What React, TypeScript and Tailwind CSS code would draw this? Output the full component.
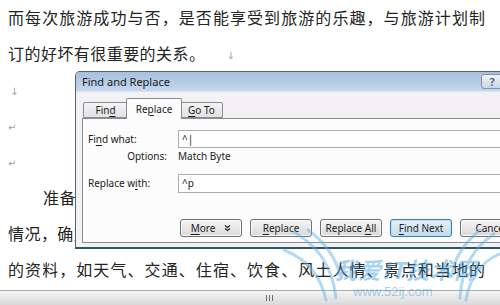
import type { ReactNode } from "react";
import { clsx } from "clsx";

const cn = (...args: Parameters<typeof clsx>) => clsx(...args);

const U = ({ children }: { children: ReactNode }) => (
  <span className="underline underline-offset-[2px] decoration-[1px]">{children}</span>
);

// paragraph / line-break marks Word shows
const Mark = ({ children, className }: { children: ReactNode; className?: string }) => (
  <span className={cn("font-['DejaVu_Sans',sans-serif] text-[10px] text-[#a3a3a3] tracking-normal align-middle", className)}>
    {children}
  </span>
);

const lines: { text?: string; indent?: boolean; full?: boolean; mark?: ReactNode }[] = [
  { text: "而每次旅游成功与否，是否能享受到旅游的乐趣，与旅游计划制", full: true },
  { text: "订的好坏有很重要的关系。", mark: <Mark className="ml-[21px]">↓</Mark> },
  { mark: <Mark className="ml-[2px]">↓</Mark> },
  { mark: <Mark>↵</Mark> },
  { mark: <Mark>↵</Mark> },
  { text: "准备工作做得是否充分，直接关系到旅游的质量。", indent: true },
  { text: "情况，确定旅游的线路和日程安排，并事先了解目的地" },
  { text: "的资料，如天气、交通、住宿、饮食、风土人情、景点和当地的", full: true },
];

const Btn = ({ children, primary }: { children: ReactNode; primary?: boolean }) => (
  <div
    className={cn(
      "w-[62px] h-[18px] shrink-0 flex items-center justify-center rounded-[3px] border text-[10px] text-[#1b1b1b] whitespace-nowrap",
      primary
        ? "border-[#3c7fb1] bg-linear-to-b from-[#e5f1f9] to-[#c4dcec] shadow-[inset_0_0_0_1px_#b9e0f7]"
        : "border-[#707070] bg-linear-to-b from-[#f4f4f4] to-[#dadada] shadow-[inset_0_0_0_1px_#fbfbfb]",
    )}
  >
    <span className="flex items-center">{children}</span>
  </div>
);

const Tab = ({ children, active, className }: { children: ReactNode; active?: boolean; className?: string }) => (
  <div
    className={cn(
      "flex items-center justify-center border border-[#898c95] rounded-t-[2px] text-[10px] text-[#1b1b1b]",
      active
        ? "h-[21px] -mb-px border-b-0 bg-[#fcfcfc] relative z-10 -mx-[2px]"
        : "h-[16px] bg-linear-to-b from-[#f3f3f3] to-[#e2e2e2]",
      className,
    )}
  >
    <span>{children}</span>
  </div>
);

function Dialog() {
  return (
    <div className="absolute left-[75px] top-[71px] w-[450px] h-[178px] flex flex-col rounded-t-[5px] border border-[#53646f] border-b-2 border-b-[#2e5661] bg-[#f3f1f3] font-['Noto_Sans','Open_Sans',sans-serif] overflow-hidden">
      {/* Title bar */}
      <div className="h-[20px] shrink-0 flex items-center pl-[6px] bg-linear-to-b from-[#a7bfdd] to-[#c4d7ee] border-b border-[#d9e5f3]">
        <span className="text-[11px] text-[#1a1a1a] leading-none">Find and Replace</span>
        <div className="ml-auto mr-[21px] w-[22px] h-[15px] flex items-center justify-center rounded-[3px] border border-[#7f93ab] bg-linear-to-b from-[#eef3f9] to-[#c9d7e8] text-[11px] font-bold text-[#5b6d80] leading-none">
          ?
        </div>
      </div>

      {/* Body */}
      <div className="flex-1 flex flex-col pl-[6px] pt-[6px]">
        {/* Tabs */}
        <div className="h-[20px] flex items-end pl-[1px]">
          <Tab className="w-[45px]">
            Fin<U>d</U>
          </Tab>
          <Tab active className="w-[56px]">
            Re<U>p</U>lace
          </Tab>
          <Tab className="w-[43px]">
            <U>G</U>o To
          </Tab>
        </div>

        {/* Panel */}
        <div className="h-[125px] border border-r-0 border-[#898c95] bg-[#fcfcfc] flex flex-col pl-[5px] text-[10px] text-[#1b1b1b]">
          <div className="mt-[11px] h-[18px] flex items-center">
            <span className="w-[90px]">
              Fi<U>n</U>d what:
            </span>
            <div className="flex-1 h-[18px] border border-[#abadb3] bg-white flex items-center pl-[3px]">^|</div>
          </div>
          <div className="h-[16px] flex items-center">
            <span className="w-[90px] text-right pr-[11px]">Options:</span>
            <span>Match Byte</span>
          </div>
          <div className="mt-[10px] h-[19px] flex items-center">
            <span className="w-[90px]">
              Replace w<U>i</U>th:
            </span>
            <div className="flex-1 h-[19px] border border-[#abadb3] bg-white flex items-center pl-[3px]">^p</div>
          </div>
          <div className="mt-[26px] flex gap-[8px] pl-[92px]">
            <Btn>
              <U>M</U>ore
              <svg width="7" height="8" viewBox="0 0 7 8" className="ml-[9px]">
                <path d="M1 1.5 L3.5 3.5 L6 1.5 M1 4.5 L3.5 6.5 L6 4.5" stroke="#222" strokeWidth="1.2" fill="none" />
              </svg>
            </Btn>
            <Btn>
              <U>R</U>eplace
            </Btn>
            <Btn>
              Replace&nbsp;<U>A</U>ll
            </Btn>
            <Btn primary>
              <U>F</U>ind Next
            </Btn>
            <Btn>Cancel</Btn>
          </div>
        </div>
      </div>
    </div>
  );
}

function Watermark() {
  return (
    <div className="absolute left-[282px] top-[228px] w-[218px] h-[77px] pointer-events-none opacity-45">
      <svg width="218" height="77" viewBox="0 0 218 77" className="absolute inset-0">
        <g fill="none" stroke="#5aaee6" strokeWidth="3" strokeLinecap="round">
          <path d="M12 4 C32 16 50 34 54 70" />
          <path d="M2 22 C22 30 38 44 44 72" />
          <path d="M26 2 C40 12 54 28 58 48" />
          <path d="M212 6 C194 18 180 36 178 70" />
          <path d="M217 26 C200 34 188 48 184 72" />
          <path d="M198 2 C186 12 172 28 170 48" />
        </g>
      </svg>
      <div className="absolute left-[52px] top-[30px] text-[23px] font-bold italic text-[#3d9be0] leading-none font-['Noto_Sans_CJK_SC',sans-serif] tracking-[1px]">
        我爱IT技术网
      </div>
      <div className="absolute left-[71px] top-[57px] text-[13px] text-[#3d9be0] leading-none font-['Liberation_Sans',sans-serif]">
        www.52ij.com
      </div>
    </div>
  );
}

export default function App() {
  return (
    <div className="relative w-[500px] h-[305px] bg-white overflow-hidden flex flex-col">
      {/* Document */}
      <div className="h-[291px] shrink-0 overflow-hidden pl-[8px] -mt-px font-['Noto_Sans_CJK_SC',sans-serif] text-[16px] text-[#232323] tracking-[0.45px]">
        {lines.map((l, i) => (
          <div
            key={i}
            className={cn(
              "h-[36px] leading-[36px] whitespace-nowrap",
              l.indent && "pl-[35px]",
              l.full && "w-[477px] text-justify [text-align-last:justify] tracking-normal",
            )}
          >
            {l.text}
            {l.mark}
          </div>
        ))}
      </div>

      {/* Horizontal scrollbar */}
      <div className="flex-1 border-t border-[#a9a9a9] bg-linear-to-b from-[#f5f5f5] to-[#d9d9d9] flex items-center pl-[266px]">
        <div className="flex gap-[2px]">
          <div className="w-px h-[6px] bg-[#6d6d6d]" />
          <div className="w-px h-[6px] bg-[#6d6d6d]" />
          <div className="w-px h-[6px] bg-[#6d6d6d]" />
        </div>
      </div>

      <Dialog />
      <Watermark />
    </div>
  );
}
